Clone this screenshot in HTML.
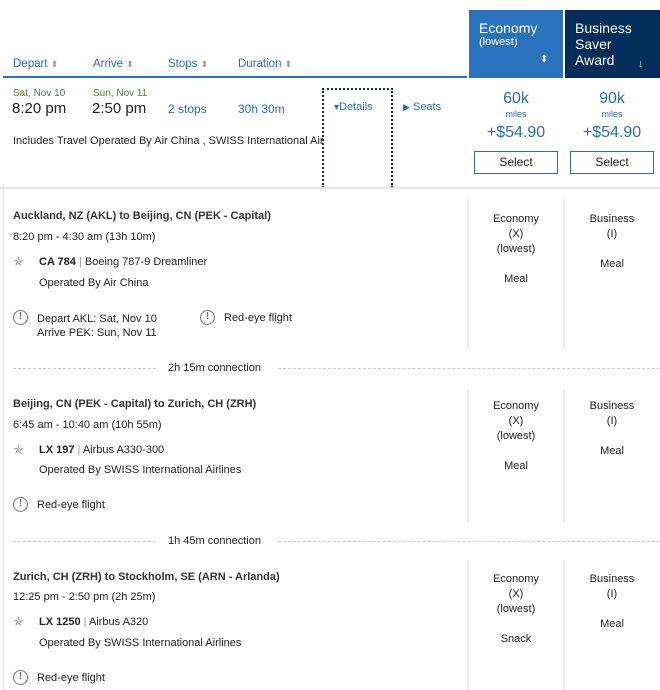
<!DOCTYPE html>
<html><head><meta charset="utf-8"><style>
*{margin:0;padding:0;box-sizing:border-box}
body{width:660px;height:690px;overflow:hidden;background:#fff;font-family:"Liberation Sans",sans-serif;color:#222;font-size:11px;position:relative}
.a{position:absolute;white-space:nowrap}
.b{color:#2a6ebb}
.g{color:#4f7a3a}
.c{text-align:center}
.vl{position:absolute;width:2px;background:#eee}
.dash{position:absolute;height:0;border-top:1px dashed #ccc}
.w{position:absolute;width:15px;height:15px;border:1.5px solid #777;border-radius:50%;font-size:10px;line-height:12px;text-align:center;color:#777;font-weight:bold}
.star{position:absolute;color:#999;font-size:13px}
.btn{position:absolute;border:1px solid #2a6ebb;height:23px;width:84px;text-align:center;line-height:21px;font-size:12px;color:#222;background:#fff}
.t{font-weight:bold;color:#333}
</style></head><body>
<div class="a b" style="left:13px;top:58px;font-size:11.5px">Depart <span style="color:#999;font-size:9px">⬍</span></div>
<div class="a b" style="left:93px;top:58px;font-size:11.5px">Arrive <span style="color:#999;font-size:9px">⬍</span></div>
<div class="a b" style="left:168px;top:58px;font-size:11.5px">Stops <span style="color:#999;font-size:9px">⬍</span></div>
<div class="a b" style="left:238px;top:58px;font-size:11.5px">Duration <span style="color:#999;font-size:9px">⬍</span></div>
<div class="a" style="left:3px;top:76px;width:464px;height:2px;background:#2a72bd"></div>
<div class="a" style="left:469px;top:10px;width:94px;height:68px;background:#2a72bd;color:#fff;padding:10px 0 0 10px">
<div style="font-size:14px">Economy</div><div style="font-size:11px">(lowest)</div>
<div style="position:absolute;left:71px;top:44px;font-size:10px">⬍</div></div>
<div class="a" style="left:565px;top:10px;width:95px;height:68px;background:#002d59;color:#fff;padding:10px 0 0 10px;font-size:14px;line-height:16px;white-space:normal">Business<br>Saver<br>Award
<div style="position:absolute;left:73px;top:46px;font-size:11px">↓</div></div>
<div class="a g" style="left:13px;top:88px;font-size:10px">Sat, Nov 10</div>
<div class="a g" style="left:93px;top:88px;font-size:10px">Sun, Nov 11</div>
<div class="a" style="left:12px;top:100px;font-size:15px">8:20 pm</div>
<div class="a" style="left:92px;top:100px;font-size:15px">2:50 pm</div>
<div class="a b" style="left:168px;top:102px;font-size:12px">2 stops</div>
<div class="a b" style="left:238px;top:102px;font-size:12px">30h 30m</div>
<div class="a" style="left:13px;top:135px;font-size:11px;width:310px;overflow:hidden">Includes Travel Operated By Air China , SWISS International Airlines</div>
<div class="a" style="left:322px;top:88px;width:71px;height:100px;border:2px dotted #002d59;border-bottom:none"></div>
<div class="a b" style="left:334px;top:101px;font-size:11px"><span style="font-size:10px">▾</span>Details</div>
<div class="a b" style="left:403px;top:101px;font-size:11px"><span style="font-size:9px">▶</span> Seats</div>
<div class="a c" style="left:469px;top:90px;width:94px;color:#2a6ebb;font-size:16px">60k</div>
<div class="a c" style="left:469px;top:109px;width:94px;color:#2a6ebb;font-size:9px">miles</div>
<div class="a c" style="left:469px;top:124px;width:94px;color:#2a6ebb;font-size:16px">+$54.90</div>
<div class="a c" style="left:565px;top:90px;width:94px;color:#2a6ebb;font-size:16px">90k</div>
<div class="a c" style="left:565px;top:109px;width:94px;color:#2a6ebb;font-size:9px">miles</div>
<div class="a c" style="left:565px;top:124px;width:94px;color:#2a6ebb;font-size:16px">+$54.90</div>
<div class="btn" style="left:474px;top:151px">Select</div>
<div class="btn" style="left:570px;top:151px">Select</div>
<div class="a" style="left:0;top:187px;width:660px;height:2px;background:#e6e6e6"></div>
<div class="a" style="left:3px;top:189px;width:1px;height:501px;background:#e6e6e6"></div>

<div class="a t" style="left:13px;top:210px">Auckland, NZ (AKL) to Beijing, CN (PEK - Capital)</div>
<div class="a" style="left:13px;top:231px">8:20 pm - 4:30 am (13h 10m)</div>
<div class="star" style="left:13px;top:254px">✯</div>
<div class="a" style="left:39px;top:256px"><b>CA 784</b> <span style="color:#999">|</span> Boeing 787-9 Dreamliner</div>
<div class="a" style="left:39px;top:277px">Operated By Air China</div>
<div class="w" style="left:13px;top:310px">!</div>
<div class="a" style="left:37px;top:312px;line-height:14px">Depart AKL: Sat, Nov 10<br>Arrive PEK: Sun, Nov 11</div>
<div class="w" style="left:200px;top:310px">!</div>
<div class="a" style="left:224px;top:312px">Red-eye flight</div>
<div class="vl" style="left:467px;top:199px;height:151px"></div>
<div class="vl" style="left:563px;top:199px;height:151px"></div>
<div class="a c" style="left:469px;top:212px;width:94px;line-height:15px">Economy<br>(X)<br>(lowest)<br><br>Meal</div>
<div class="a c" style="left:565px;top:212px;width:94px;line-height:15px">Business<br>(I)<br><br>Meal</div>
<div class="dash" style="left:13px;top:368px;width:143px"></div>
<div class="a" style="left:168px;top:362px">2h 15m connection</div>
<div class="dash" style="left:278px;top:368px;width:382px"></div>

<div class="a t" style="left:13px;top:398px">Beijing, CN (PEK - Capital) to Zurich, CH (ZRH)</div>
<div class="a" style="left:13px;top:419px">6:45 am - 10:40 am (10h 55m)</div>
<div class="star" style="left:13px;top:442px">✯</div>
<div class="a" style="left:39px;top:444px"><b>LX 197</b> <span style="color:#999">|</span> Airbus A330-300</div>
<div class="a" style="left:39px;top:464px">Operated By SWISS International Airlines</div>
<div class="w" style="left:13px;top:497px">!</div>
<div class="a" style="left:37px;top:499px">Red-eye flight</div>
<div class="vl" style="left:467px;top:389px;height:134px"></div>
<div class="vl" style="left:563px;top:389px;height:134px"></div>
<div class="a c" style="left:469px;top:399px;width:94px;line-height:15px">Economy<br>(X)<br>(lowest)<br><br>Meal</div>
<div class="a c" style="left:565px;top:399px;width:94px;line-height:15px">Business<br>(I)<br><br>Meal</div>
<div class="dash" style="left:13px;top:541px;width:143px"></div>
<div class="a" style="left:168px;top:535px">1h 45m connection</div>
<div class="dash" style="left:278px;top:541px;width:382px"></div>

<div class="a t" style="left:13px;top:571px">Zurich, CH (ZRH) to Stockholm, SE (ARN - Arlanda)</div>
<div class="a" style="left:13px;top:591px">12:25 pm - 2:50 pm (2h 25m)</div>
<div class="star" style="left:13px;top:614px">✯</div>
<div class="a" style="left:39px;top:616px"><b>LX 1250</b> <span style="color:#999">|</span> Airbus A320</div>
<div class="a" style="left:39px;top:637px">Operated By SWISS International Airlines</div>
<div class="w" style="left:13px;top:670px">!</div>
<div class="a" style="left:37px;top:672px">Red-eye flight</div>
<div class="vl" style="left:467px;top:560px;height:130px"></div>
<div class="vl" style="left:563px;top:560px;height:130px"></div>
<div class="a c" style="left:469px;top:572px;width:94px;line-height:15px">Economy<br>(X)<br>(lowest)<br><br>Snack</div>
<div class="a c" style="left:565px;top:572px;width:94px;line-height:15px">Business<br>(I)<br><br>Meal</div>
</body></html>
